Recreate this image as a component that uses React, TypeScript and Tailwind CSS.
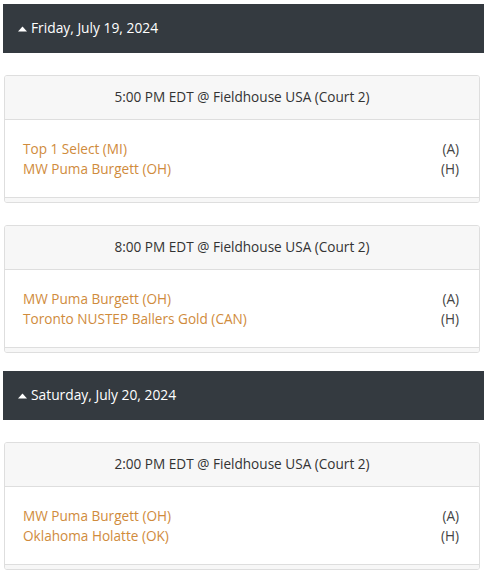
const days = [
  {
    date: "Friday, July 19, 2024",
    games: [
      {
        time: "5:00 PM EDT @ Fieldhouse USA (Court 2)",
        away: "Top 1 Select (MI)",
        home: "MW Puma Burgett (OH)",
      },
      {
        time: "8:00 PM EDT @ Fieldhouse USA (Court 2)",
        away: "MW Puma Burgett (OH)",
        home: "Toronto NUSTEP Ballers Gold (CAN)",
      },
    ],
  },
  {
    date: "Saturday, July 20, 2024",
    games: [
      {
        time: "2:00 PM EDT @ Fieldhouse USA (Court 2)",
        away: "MW Puma Burgett (OH)",
        home: "Oklahoma Holatte (OK)",
      },
    ],
  },
];

function GameCard({ time, away, home }: { time: string; away: string; home: string }) {
  return (
    <div className="ml-[1px] mr-[4px] mt-[22px] border border-[#dedede] rounded-[3px] overflow-hidden">
      <div className="h-[44px] bg-[#f7f7f7] border-b border-[#dedede] flex items-center justify-center text-[13.6px] text-[#333]">
        {time}
      </div>
      <div className="h-[77px] bg-white px-[18px] pt-[19px] text-[13.6px] leading-[20px]">
        <div className="flex justify-between">
          <span className="text-[#d08b3c]">{away}</span>
          <span className="text-[#444] pr-[2px]">(A)</span>
        </div>
        <div className="flex justify-between">
          <span className="text-[#d08b3c]">{home}</span>
          <span className="text-[#444] pr-[2px]">(H)</span>
        </div>
      </div>
      <div className="h-[5px] bg-[#f7f7f7] border-t border-[#dedede]" />
    </div>
  );
}

export default function App() {
  return (
    <div
      className="w-[484px] h-[577px] overflow-hidden bg-white pl-[3px] pt-[4px]"
      style={{ fontFamily: '"Open Sans", "Noto Sans", sans-serif' }}
    >
      {days.map((day, i) => (
        <div key={day.date} className={i > 0 ? "mt-[18px]" : ""}>
          <div className="h-[49px] bg-[#343a40] flex items-center pl-[15px] text-white text-[13.8px]">
            <svg width="9" height="6" viewBox="0 0 9 6" className="mr-[4px]">
              <path d="M0 5.5 L4.5 0.5 L9 5.5 Z" fill="white" />
            </svg>
            <span>{day.date}</span>
          </div>
          {day.games.map((g) => (
            <GameCard key={g.time + g.away} {...g} />
          ))}
        </div>
      ))}
    </div>
  );
}
